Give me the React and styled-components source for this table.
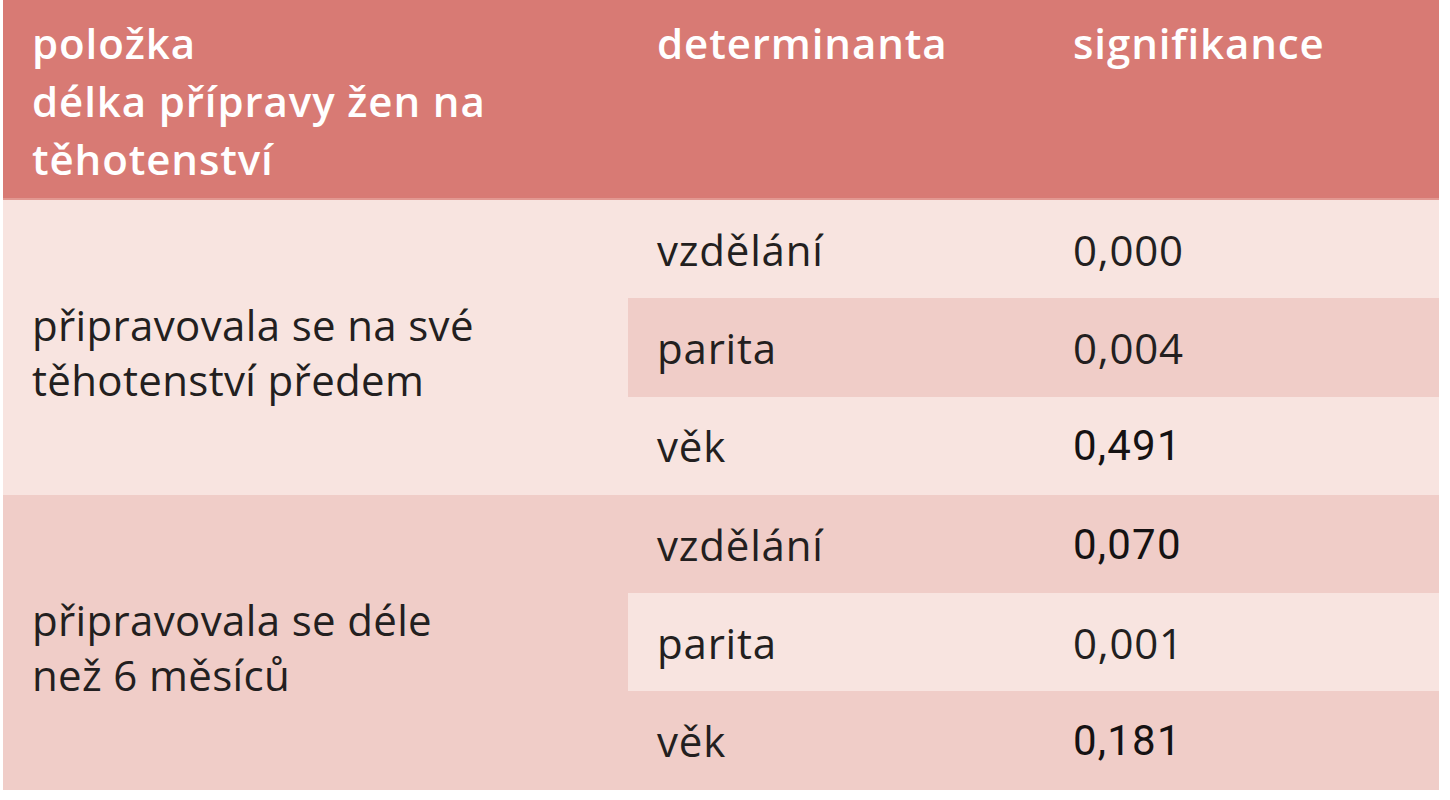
import React from "react";
import styled, { createGlobalStyle } from "styled-components";

const GlobalStyle = createGlobalStyle`
  html, body { margin: 0; padding: 0; background: #ffffff; }
  body { font-family: "Open Sans", "Noto Sans", sans-serif; }
`;

const COLORS = {
  head: "#d87a74",
  headLine: "#e29891",
  light: "#f8e4e0",
  mid: "#f0cdc8",
  text: "#231f20",
};

const Page = styled.div`
  padding: 0 0 0 3px;
  width: 1436px;
`;

const Table = styled.div`
  display: flex;
  flex-direction: column;
  width: 1436px;
`;

const HeaderRow = styled.div`
  display: grid;
  grid-template-columns: 625px 416px 1fr;
  height: 198px;
  background: ${COLORS.head};
  border-bottom: 2px solid ${COLORS.headLine};
  box-sizing: content-box;
`;

const HeadCell = styled.div`
  padding: 14px 0 0 29px;
  color: #ffffff;
  font-weight: 600;
  font-size: 42px;
  line-height: 58px;
  letter-spacing: 0.9px;
  white-space: nowrap;
`;

const Group = styled.div`
  display: grid;
  grid-template-columns: 625px 1fr;
  background: ${(p) => p.$bg};
`;

const Label = styled.div`
  display: flex;
  align-items: center;
  padding: 10px 0 0 29px;
  font-size: 42px;
  line-height: 55px;
  letter-spacing: 0.35px;
  color: ${COLORS.text};
  white-space: nowrap;
`;

const SubRows = styled.div`
  display: flex;
  flex-direction: column;
`;

const SubRow = styled.div`
  display: grid;
  grid-template-columns: 416px 1fr;
  align-items: center;
  height: 98.3px;
  background: ${(p) => p.$bg || "transparent"};
`;

const Cell = styled.div`
  padding-left: 29px;
  font-size: 42px;
  letter-spacing: 0.8px;
  color: ${COLORS.text};
  font-family: "Open Sans", "Noto Sans", sans-serif;
`;

const AltValue = styled(Cell)`
  font-family: "Roboto", "Liberation Sans", sans-serif;
  font-size: 42px;
  letter-spacing: 1.2px;
  color: #151213;
`;

const groups = [
  {
    label: ["připravovala se na své", "těhotenství předem"],
    bg: COLORS.light,
    alt: COLORS.mid,
    rows: [
      { d: "vzdělání", v: "0,000" },
      { d: "parita", v: "0,004" },
      { d: "věk", v: "0,491", alt: true },
    ],
  },
  {
    label: ["připravovala se déle", "než 6 měsíců"],
    bg: COLORS.mid,
    alt: COLORS.light,
    rows: [
      { d: "vzdělání", v: "0,070", alt: true },
      { d: "parita", v: "0,001" },
      { d: "věk", v: "0,181", alt: true },
    ],
  },
];

export default function App() {
  return (
    <>
      <GlobalStyle />
      <Page>
        <Table>
          <HeaderRow>
            <HeadCell>
              položka
              <br />
              délka přípravy žen na
              <br />
              těhotenství
            </HeadCell>
            <HeadCell>determinanta</HeadCell>
            <HeadCell>signifikance</HeadCell>
          </HeaderRow>
          {groups.map((g, gi) => (
            <Group key={gi} $bg={g.bg}>
              <Label>
                <div>
                  {g.label[0]}
                  <br />
                  {g.label[1]}
                </div>
              </Label>
              <SubRows>
                {g.rows.map((r, ri) => (
                  <SubRow key={ri} $bg={ri === 1 ? g.alt : undefined}>
                    <Cell>{r.d}</Cell>
                    {r.alt ? <AltValue>{r.v}</AltValue> : <Cell>{r.v}</Cell>}
                  </SubRow>
                ))}
              </SubRows>
            </Group>
          ))}
        </Table>
      </Page>
    </>
  );
}
